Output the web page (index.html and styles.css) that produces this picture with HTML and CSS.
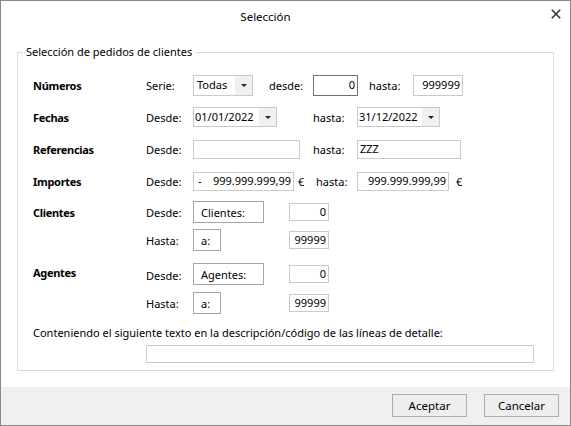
FILE: index.html
```html
<!DOCTYPE html>
<html lang="es">
<head>
<meta charset="utf-8">
<title>Selección</title>
<link rel="stylesheet" href="styles.css">
</head>
<body>
<div class="window">
  <header class="titlebar">
    <span class="title">Selección</span>
    <span class="close"><svg width="10" height="10" viewBox="0 0 10 10"><path d="M0.8 0.8 L9.2 9.2 M9.2 0.8 L0.8 9.2" stroke="#333" stroke-width="1.6" fill="none"/></svg></span>
  </header>
  <main class="content">
    <fieldset class="group">
      <legend>Selección de pedidos de clientes</legend>

      <div class="row r1">
        <span class="lbl">Números</span>
        <span class="sub">Serie:</span>
        <div class="field combo w-serie h21"><span class="val">Todas</span><span class="drop"><span class="tri"></span></span></div>
        <span class="txt t-desde">desde:</span>
        <div class="field num focus w-desde h21">0</div>
        <span class="txt t-hasta1">hasta:</span>
        <div class="field num w-hasta1 h21">999999</div>
      </div>

      <div class="row r2">
        <span class="lbl">Fechas</span>
        <span class="sub">Desde:</span>
        <div class="field combo date w-date1 h20"><span class="val">01/01/2022</span><span class="drop"><span class="tri"></span></span></div>
        <span class="txt t-hasta2">hasta:</span>
        <div class="field combo date w-date2 h20"><span class="val">31/12/2022</span><span class="drop"><span class="tri"></span></span></div>
      </div>

      <div class="row r3">
        <span class="lbl">Referencias</span>
        <span class="sub">Desde:</span>
        <div class="field w-ref1 h19"></div>
        <span class="txt t-hasta3">hasta:</span>
        <div class="field w-ref2 h19 pl">ZZZ</div>
      </div>

      <div class="row r4">
        <span class="lbl">Importes</span>
        <span class="sub">Desde:</span>
        <div class="field amount w-imp1 h19"><span class="sign">-</span><span>999.999.999,99</span></div>
        <span class="euro e1">€</span>
        <span class="txt t-hasta4">hasta:</span>
        <div class="field amount w-imp2 h19"><span></span><span>999.999.999,99</span></div>
        <span class="euro e2">€</span>
      </div>

      <div class="row r5">
        <span class="lbl">Clientes</span>
        <span class="sub">Desde:</span>
        <div class="box w-name">Clientes:</div>
        <div class="field num w-code h18">0</div>
      </div>

      <div class="row r6">
        <span class="lbl"></span>
        <span class="sub">Hasta:</span>
        <div class="box w-a">a:</div>
        <div class="field num w-code h18">99999</div>
      </div>

      <div class="row r7">
        <span class="lbl up">Agentes</span>
        <span class="sub down">Desde:</span>
        <div class="box w-name">Agentes:</div>
        <div class="field num w-code h18">0</div>
      </div>

      <div class="row r8">
        <span class="lbl"></span>
        <span class="sub">Hasta:</span>
        <div class="box w-a">a:</div>
        <div class="field num w-code h18">99999</div>
      </div>

      <div class="note">Conteniendo el siguiente texto en la descripción/código de las líneas de detalle:</div>
      <div class="field wide h18"></div>
    </fieldset>
  </main>
  <footer class="footer">
    <button class="btn">Aceptar</button>
    <button class="btn">Cancelar</button>
  </footer>
</div>
</body>
</html>
```

FILE: styles.css
```css
* { box-sizing: border-box; }
html, body { margin: 0; padding: 0; background: #fff; }
body {
  font-family: "Noto Sans", "Open Sans", sans-serif;
  font-size: 11px;
  color: #000;
}
.window {
  width: 571px;
  height: 426px;
  border: 1px solid #8a8a8a;
  display: flex;
  flex-direction: column;
  background: #fff;
}
.titlebar {
  height: 32px;
  display: grid;
  grid-template-columns: 1fr 28px;
  flex-shrink: 0;
}
.title {
  align-self: center;
  justify-self: center;
  padding-right: 12px;
  font-size: 11.5px;
  line-height: 16px;
}
.close {
  align-self: start;
  justify-self: center;
  margin-top: 8px;
  width: 10px;
  height: 10px;
  display: flex;
}
.content {
  flex: 1;
}
.group {
  margin: 11px 16px 0 16px;
  padding: 14px 10px 7px 15px;
  border: 1px solid #dcdcdc;
  min-width: 0;
}
.group legend {
  padding: 0 3px;
  margin-left: -10px;
  line-height: 16px;
  font-size: 11px;
}
.row {
  display: flex;
  align-items: center;
  height: 22px;
}
.r2, .r3, .r4 { margin-top: 10px; }
.r5 { margin-top: 9px; }
.r6 { margin-top: 6px; }
.r7 { margin-top: 12px; }
.r8 { margin-top: 7px; }
.lbl {
  width: 113px;
  flex-shrink: 0;
  font-weight: 700;
  font-size: 11px;
  letter-spacing: -0.3px;
}
.lbl.up { position: relative; top: -2px; }
.sub.down { position: relative; top: 1px; }
.sub {
  width: 47px;
  flex-shrink: 0;
}
.txt { flex-shrink: 0; width: 44px; }
.t-desde { margin-left: 16px; }
.t-hasta1 { margin-left: 11px; }
.t-hasta2 { margin-left: 36px; }
.t-hasta3 { margin-left: 13px; }
.t-hasta4 { margin-left: 8px; width: 41px; }
.field {
  flex-shrink: 0;
  border: 1px solid #cacaca;
  background: #fff;
  display: flex;
  align-items: center;
  line-height: 14px;
}
.field.focus { border-color: #6f6f6f; }
.field.num { justify-content: flex-end; padding-right: 2px; }
.field.pl { padding-left: 2px; }
.h21 { height: 21px; }
.h20 { height: 20px; }
.h19 { height: 19px; }
.h18 { height: 18px; }
.combo { padding-left: 3px; padding-right: 0; }
.combo .val { flex: 1; }
.combo.date { padding-left: 1px; }
.combo .drop {
  width: 17px;
  align-self: stretch;
  background: #f0f0f0;
  display: flex;
  align-items: center;
  justify-content: center;
}
.tri {
  width: 0; height: 0;
  border-left: 3px solid transparent;
  border-right: 3px solid transparent;
  border-top: 3px solid #222;
}
.w-serie { width: 60px; }
.w-desde { width: 45px; }
.w-hasta1 { width: 50px; }
.w-date1 { width: 84px; }
.w-date2 { width: 83px; }
.w-ref1 { width: 107px; }
.w-ref2 { width: 104px; }
.w-imp1 { width: 101px; }
.w-imp2 { width: 92px; }
.amount { justify-content: space-between; padding: 0 2px 0 4px; }
.euro { flex-shrink: 0; width: 10px; }
.e1 { margin-left: 4px; }
.e2 { margin-left: 7px; }
.box {
  flex-shrink: 0;
  height: 22px;
  border: 1px solid #a5a5a5;
  display: flex;
  align-items: center;
  padding-left: 7px;
}
.w-name { width: 71px; }
.w-a { width: 28px; }
.w-code { width: 40px; }
.r5 .w-code, .r7 .w-code { margin-left: 25px; }
.r6 .w-code, .r8 .w-code { margin-left: 68px; }
.note {
  margin-top: 11px;
  height: 16px;
  line-height: 16px;
}
.wide {
  margin-top: 4px;
  margin-left: 113px;
  width: 388px;
}
.footer {
  height: 38px;
  flex-shrink: 0;
  background: #f0f0f0;
  display: flex;
  justify-content: flex-end;
  align-items: flex-start;
  padding: 7px 11px 0 0;
  gap: 17px;
}
.btn {
  width: 75px;
  height: 23px;
  border: 1px solid #adadad;
  background: #eeeeee;
  font: inherit;
  font-size: 11.5px;
  color: #000;
  padding: 0;
}
```
